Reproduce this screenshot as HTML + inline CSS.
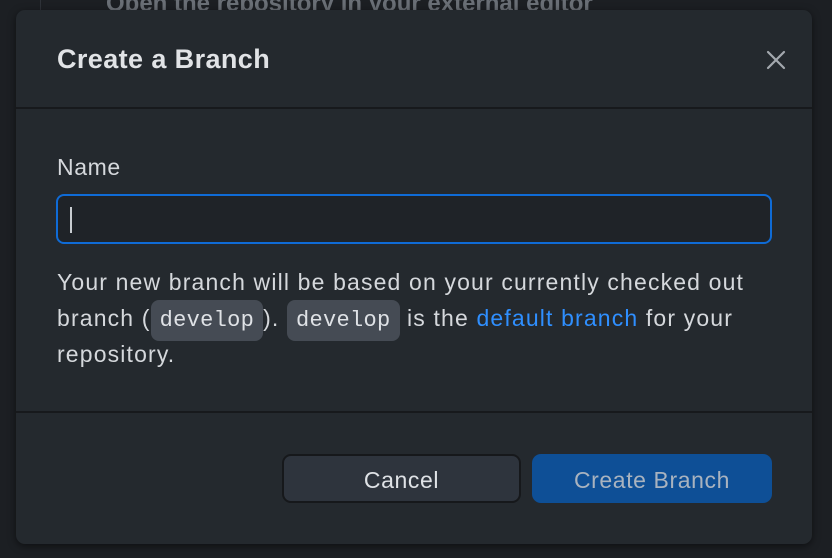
<!DOCTYPE html>
<html><head><style>
html,body{margin:0;padding:0;}
body{width:832px;height:558px;background:#1c1f23;position:relative;overflow:hidden;font-family:"Liberation Sans",sans-serif;}
.bgtext{position:absolute;left:106px;top:-10px;color:#6a6f76;font-size:24px;font-weight:bold;}
.vline{position:absolute;left:40px;top:0;width:1px;height:10px;background:#2e3238;}
.dlg{position:absolute;left:16px;top:10px;width:796px;height:534px;background:#24292e;border-radius:9px;box-shadow:0 2px 8px rgba(0,0,0,.5);}
.title{position:absolute;left:41px;top:34px;font-size:27px;letter-spacing:0.4px;font-weight:bold;color:#e1e3e6;}
.x{position:absolute;left:750px;top:40px;}
.sep{position:absolute;left:0;width:796px;height:2px;background:#17191c;}
.label{position:absolute;left:41px;top:144px;font-size:23px;letter-spacing:0.6px;color:#d5d8dc;}
.input{position:absolute;left:40px;top:184px;width:712px;height:46px;border:2px solid #0f6bd6;border-radius:8px;background:#1f2328;}
.caret{position:absolute;left:12px;top:11px;width:2px;height:26px;background:#c8ccd1;}
.ln{position:absolute;left:41px;height:36px;font-size:23px;letter-spacing:1.15px;line-height:36px;color:#d5d8dc;white-space:nowrap;}
code{font-family:"Liberation Mono",monospace;font-size:22px;letter-spacing:0.3px;background:#454b54;border-radius:8px;padding:8px 9px;color:#dfe2e6;}
a{color:#2f8fff;text-decoration:none;}
.btn{position:absolute;top:444px;height:49px;border-radius:9px;font-size:23px;letter-spacing:0.6px;display:flex;align-items:center;justify-content:center;box-sizing:border-box;padding-top:3px;}
.cancel{left:266px;width:239px;background:#2e343d;border:2px solid #16181b;color:#dfe2e6;}
.create{left:516px;width:240px;background:#0e4f96;color:#a9b3bf;}
</style></head><body>
<div class="bgtext">Open the repository in your external editor</div>
<div class="vline"></div>
<div class="dlg">
<div class="title">Create a Branch</div>
<svg class="x" width="20" height="20" viewBox="0 0 20 20"><path d="M2 2L18 18M18 2L2 18" stroke="#a3a8ae" stroke-width="2.2" stroke-linecap="round"/></svg>
<div class="sep" style="top:97px"></div>
<div class="label">Name</div>
<div class="input"><div class="caret"></div></div>
<div class="ln" style="top:254px">Your new branch will be based on your currently checked out</div>
<div class="ln" style="top:290px">branch (<code>develop</code>). <code>develop</code> is the <a>default branch</a> for your</div>
<div class="ln" style="top:326px">repository.</div>
<div class="sep" style="top:401px"></div>
<div class="btn cancel">Cancel</div>
<div class="btn create">Create Branch</div>
</div>
</body></html>
